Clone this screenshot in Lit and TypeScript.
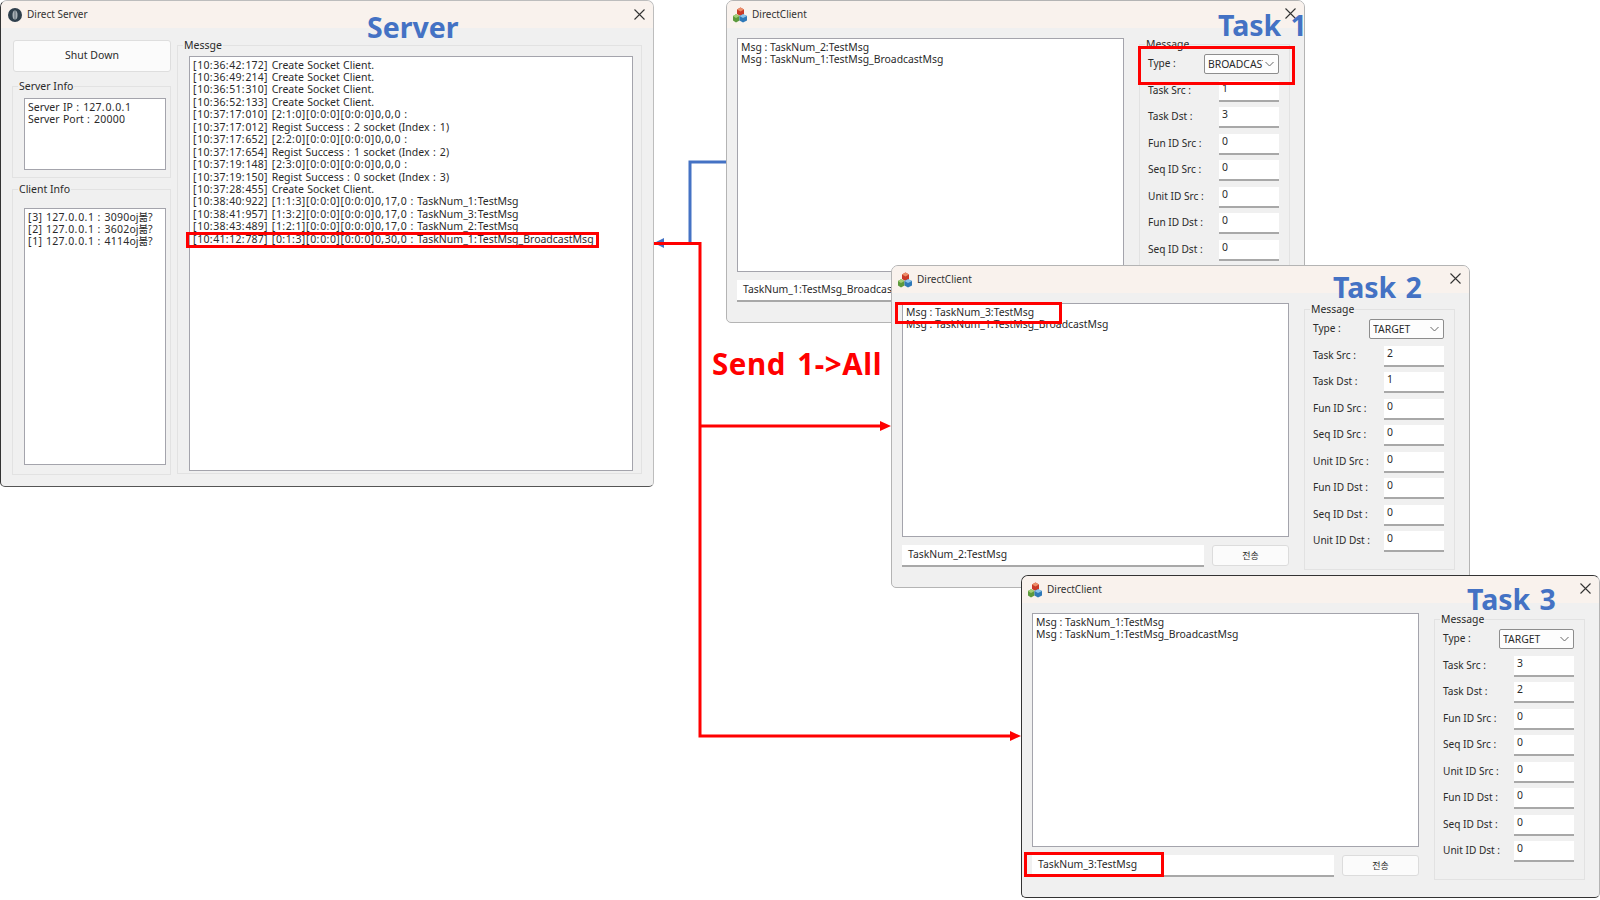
import { LitElement, html, css } from "lit";
import { customElement, property } from "lit/decorators.js";

const textFont = css`"Noto Sans", "Noto Sans CJK KR", sans-serif`;

/* The reference face has wider figures and punctuation than Noto Sans, so runs of them get extra tracking. */
const spaced = (line: string) =>
  line.split(/(\d+|[\[\]:,.]+)/).map((part) =>
    /^\d+$/.test(part)
      ? html`<span class="dg">${part}</span>`
      : /^[\[\]:,.]+$/.test(part)
        ? html`<span class="pc">${part}</span>`
        : part
  );

@customElement("client-window")
class ClientWindow extends LitElement {
  @property({ type: Number }) taskLeft = 441;
  @property({ type: Number }) taskTop = 8;
  @property() task = "";
  @property() type = "TARGET";
  @property() input = "";
  @property({ type: Array }) log: string[] = [];
  @property({ type: Array }) values: string[] = [];
  @property({ type: Boolean }) dark = false;

  static styles = css`
    :host { position: absolute; display: block; }
    .win { position: relative; box-sizing: border-box; width: 579px; height: 323px; background: #f0f0f0; border: 1px solid #b4b4b4; border-radius: 7px 7px 5px 5px; overflow: hidden; font: 10.4px/12.4px ${textFont}; color: #2a2a2a; }
    .win.dark { border-color: #333 #b4b4b4 #333 #333; }
    .title { display: flex; align-items: center; gap: 4px; height: 27px; padding-left: 5px; background: #f9f2ed; font-size: 10px; color: #333; }
    .title svg { flex: none; }
    .close { position: absolute; right: 8px; top: 7px; }
    .task { position: absolute; font: 700 28.5px/32px "Noto Sans", sans-serif; word-spacing: 2px; color: #4472c4; white-space: nowrap; }
    .body { display: flex; padding: 10px 0 0 10px; gap: 15px; }
    .left { display: flex; flex-direction: column; gap: 8px; width: 387px; }
    .log { box-sizing: border-box; height: 234px; background: #fff; border: 1px solid #a4a4ac; padding: 1.5px 3px; white-space: nowrap; }
    .row { display: flex; gap: 8px; }
    .edit { box-sizing: border-box; background: #fff; border-bottom: 2px solid #a8a8a8; padding: 1px 3px; overflow: hidden; white-space: nowrap; }
    .send { box-sizing: border-box; flex: none; width: 77px; height: 21px; background: #fbfbfb; border: 1px solid #dcdcdc; border-radius: 3px; font-size: 9px; line-height: 19px; text-align: center; }
    .row .edit { width: 302px; height: 22px; padding: 3px 6px; }
    .group { position: relative; box-sizing: border-box; width: 151px; height: 261px; margin-top: 6px; border: 1px solid #e2e2e2; padding: 9px 10px 0 8px; }
    .legend { position: absolute; left: 5px; top: -7px; padding: 0 1px; background: #f0f0f0; }
    .field { display: flex; align-items: center; justify-content: space-between; height: 21px; margin-bottom: 5.5px; }
    .field > span { position: relative; top: -1px; font-size: 10.1px; }
    .field.type { height: 20px; margin-bottom: 6.5px; }
    .field .edit { width: 60px; height: 21px; }
    .combo { box-sizing: border-box; display: flex; align-items: center; justify-content: space-between; width: 75px; height: 20px; background: #fdfdfd; border: 1px solid #8d8d8d; border-radius: 2px; padding: 0 4px 0 3px; overflow: hidden; white-space: nowrap; }
    .combo span { overflow: hidden; flex: 1; }
    .combo svg { flex: none; margin-left: 2px; }
  `;

  render() {
    const labels = ["Task Src :", "Task Dst :", "Fun ID Src :", "Seq ID Src :", "Unit ID Src :", "Fun ID Dst :", "Seq ID Dst :", "Unit ID Dst :"];
    return html`
      <div class="win ${this.dark ? "dark" : ""}">
        <div class="title">
          <svg width="16" height="16" viewBox="0 0 16 16">
            <path d="M5 2.500L8.500.500 12 2.500V7L8.500 9 5 7z" fill="#c93a28"/>
            <path d="M5 2.500L8.500.500 12 2.500 8.500 4.500z" fill="#ec8f6a"/>
            <path d="M1 9l3-1.700L7.500 9v4.500L4 15.500 1 13.500z" fill="#5d9a3c"/>
            <path d="M1 9l3-1.700L7.500 9 4 11z" fill="#a4cf78"/>
            <path d="M7.500 9L11 7.200 15 9v4.500L11 15.500 7.500 13.500z" fill="#2f79b8"/>
            <path d="M7.500 9L11 7.200 15 9 11 11z" fill="#8cc4ea"/>
          </svg>
          <span>DirectClient</span>
        </div>
        <svg class="close" width="11" height="11" viewBox="0 0 11 11"><path d="M.5.500l10 10M10.500.500l-10 10" stroke="#333" stroke-width="1.100" fill="none"/></svg>
        <div class="task" style="left:${this.taskLeft}px;top:${this.taskTop}px">${this.task}</div>
        <div class="body">
          <div class="left">
            <div class="log">${this.log.map((l) => html`<div>${l}</div>`)}</div>
            <div class="row">
              <div class="edit">${this.input}</div>
              <div class="send">전송</div>
            </div>
          </div>
          <div class="group">
            <span class="legend">Message</span>
            <div class="field type">
              <span>Type :</span>
              <div class="combo"><span>${this.type}</span>
                <svg width="9" height="6" viewBox="0 0 9 6"><path d="M.5 1l4 4 4-4" stroke="#666" fill="none"/></svg>
              </div>
            </div>
            ${labels.map((l, i) => html`<div class="field"><span>${l}</span><div class="edit">${this.values[i]}</div></div>`)}
          </div>
        </div>
      </div>`;
  }
}

@customElement("app-root")
export class AppRoot extends LitElement {
  static styles = css`
    :host { display: block; position: relative; width: 1600px; height: 900px; overflow: hidden; background: #fff; font: 10.5px/12.45px ${textFont}; color: #2a2a2a; }
    .server { position: absolute; left: 0; top: 0; box-sizing: border-box; width: 654px; height: 487px; background: #f0f0f0; border: 1px solid #bdbdbd; border-left-color: #333; border-bottom-color: #555; border-radius: 7px 7px 5px 5px; overflow: hidden; }
    .title { display: flex; align-items: center; gap: 5px; height: 27px; padding-left: 7px; background: #f9f2ed; font-size: 10px; color: #333; }
    .close { position: absolute; right: 8px; top: 8px; }
    .srv-title { position: absolute; left: 366px; top: 10px; font: 700 28.5px/32px "Noto Sans", sans-serif; color: #4472c4; }
    .sbody { display: flex; gap: 6px; padding: 12px 0 0 11px; }
    .col { display: flex; flex-direction: column; width: 159px; }
    .btn { box-sizing: border-box; width: 158px; height: 32px; margin-left: 1px; background: #fbfbfb; border: 1px solid #dedede; border-radius: 3px; text-align: center; line-height: 29px; font-size: 10.5px; }
    .box { position: relative; box-sizing: border-box; border: 1px solid #e2e2e2; }
    .legend { position: absolute; left: 5px; top: -7px; padding: 0 1px; background: #f0f0f0; }
    .area { box-sizing: border-box; background: #fff; border: 1px solid #a4a4ac; padding: 1.5px 3px; white-space: nowrap; overflow: hidden; word-spacing: .6px; }
    .dg { letter-spacing: .2px; }
    .pc { letter-spacing: .8px; }
    .info { height: 92px; margin-top: 14px; padding: 11px 4px 0 11px; }
    .info .area { height: 72px; }
    .clients { height: 286px; margin-top: 11px; padding: 18px 4px 0 11px; }
    .clients .area { height: 257px; }
    .msg { width: 465px; height: 429px; margin-top: 5px; padding: 10px 8px 0 11px; }
    .msg .area { height: 415px; }
    .overlay { position: absolute; left: 0; top: 0; pointer-events: none; }
    .send-all { position: absolute; left: 712px; top: 344px; font: 700 29.5px/40px "Noto Sans", sans-serif; letter-spacing: .6px; word-spacing: 3px; color: #ff0000; white-space: nowrap; }
  `;

  render() {
    const serverLog = [
      "[10:36:42:172] Create Socket Client.",
      "[10:36:49:214] Create Socket Client.",
      "[10:36:51:310] Create Socket Client.",
      "[10:36:52:133] Create Socket Client.",
      "[10:37:17:010] [2:1:0][0:0:0][0:0:0]0,0,0 :",
      "[10:37:17:012] Regist Success : 2 socket (Index : 1)",
      "[10:37:17:652] [2:2:0][0:0:0][0:0:0]0,0,0 :",
      "[10:37:17:654] Regist Success : 1 socket (Index : 2)",
      "[10:37:19:148] [2:3:0][0:0:0][0:0:0]0,0,0 :",
      "[10:37:19:150] Regist Success : 0 socket (Index : 3)",
      "[10:37:28:455] Create Socket Client.",
      "[10:38:40:922] [1:1:3][0:0:0][0:0:0]0,17,0 : TaskNum_1:TestMsg",
      "[10:38:41:957] [1:3:2][0:0:0][0:0:0]0,17,0 : TaskNum_3:TestMsg",
      "[10:38:43:489] [1:2:1][0:0:0][0:0:0]0,17,0 : TaskNum_2:TestMsg",
      "[10:41:12:787] [0:1:3][0:0:0][0:0:0]0,30,0 : TaskNum_1:TestMsg_BroadcastMsg",
    ];
    const serverInfo = ["Server IP : 127.0.0.1", "Server Port : 20000"];
    const clientInfo = ["[3] 127.0.0.1 : 3090oj볾?", "[2] 127.0.0.1 : 3602oj볾?", "[1] 127.0.0.1 : 4114oj볾?"];
    const lines = (list: string[]) => list.map((l) => html`<div>${spaced(l)}</div>`);
    return html`
      <svg class="overlay" width="1600" height="900">
        <path d="M726 162H690V243" stroke="#4472c4" stroke-width="3" fill="none"/>
        <path d="M654 243l10-5v10z" fill="#4472c4"/>
      </svg>
      <div class="server">
        <div class="title">
          <svg width="14" height="14" viewBox="0 0 14 14"><circle cx="7" cy="7" r="7" fill="#2f3f4c"/><ellipse cx="7" cy="7" rx="2.500" ry="4.500" fill="#aab2b8"/><rect x="6.500" y="2.500" width="1" height="9" fill="#5a6771"/></svg>
          <span>Direct Server</span>
        </div>
        <svg class="close" width="11" height="11" viewBox="0 0 11 11"><path d="M.5.500l10 10M10.500.500l-10 10" stroke="#333" stroke-width="1.100" fill="none"/></svg>
        <div class="srv-title">Server</div>
        <div class="sbody">
          <div class="col">
            <div class="btn">Shut Down</div>
            <div class="box info"><span class="legend">Server Info</span>
              <div class="area">${lines(serverInfo)}</div>
            </div>
            <div class="box clients"><span class="legend">Client Info</span>
              <div class="area">${lines(clientInfo)}</div>
            </div>
          </div>
          <div class="box msg"><span class="legend">Messge</span>
            <div class="area">${lines(serverLog)}</div>
          </div>
        </div>
      </div>
      <client-window style="left:726px;top:0" task="Task 1" .taskLeft=${491} .taskTop=${8} type="BROADCAST" input="TaskNum_1:TestMsg_BroadcastMsg"
        .log=${["Msg : TaskNum_2:TestMsg", "Msg : TaskNum_1:TestMsg_BroadcastMsg"]}
        .values=${["1", "3", "0", "0", "0", "0", "0", "0"]}></client-window>
      <client-window style="left:891px;top:265px" task="Task 2" .taskLeft=${441} .taskTop=${5} input="TaskNum_2:TestMsg"
        .log=${["Msg : TaskNum_3:TestMsg", "Msg : TaskNum_1:TestMsg_BroadcastMsg"]}
        .values=${["2", "1", "0", "0", "0", "0", "0", "0"]}></client-window>
      <client-window style="left:1021px;top:575px" task="Task 3" .taskLeft=${445} .taskTop=${7} input="TaskNum_3:TestMsg" dark
        .log=${["Msg : TaskNum_1:TestMsg", "Msg : TaskNum_1:TestMsg_BroadcastMsg"]}
        .values=${["3", "2", "0", "0", "0", "0", "0", "0"]}></client-window>
      <svg class="overlay" width="1600" height="900">
        <g fill="none" stroke="#ff0000" stroke-width="3">
          <path d="M654 243.500H700V736H1010"/>
          <path d="M700 426H880"/>
          <rect x="187.500" y="233.500" width="410" height="13"/>
          <rect x="1139.500" y="47.500" width="154" height="36"/>
          <rect x="896.500" y="303.500" width="164" height="19"/>
          <rect x="1025.500" y="853.500" width="137" height="22"/>
        </g>
        <path d="M891 426l-11-5v10z M1021 736l-11-5v10z" fill="#ff0000"/>
      </svg>
      <div class="send-all">Send 1-&gt;All</div>
    `;
  }
}
